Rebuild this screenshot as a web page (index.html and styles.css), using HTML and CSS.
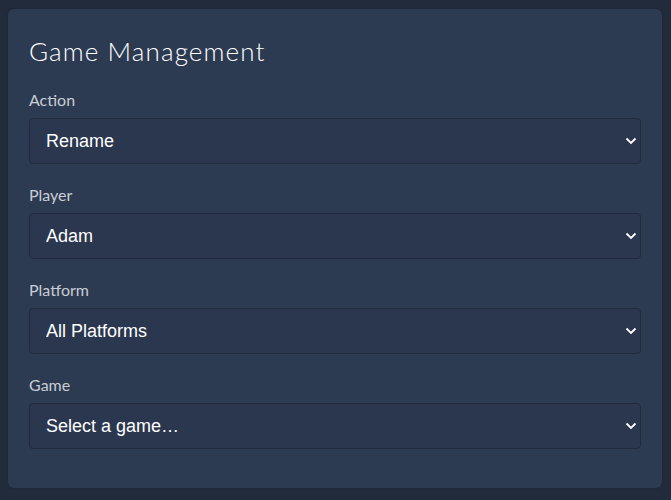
FILE: index.html
```html
<!DOCTYPE html>
<html lang="en">
<head>
<meta charset="utf-8">
<title>Game Management</title>
<link rel="stylesheet" href="styles.css">
</head>
<body>
<div class="page">
  <section class="card">
    <h1 class="title">Game Management</h1>
    <div class="field">
      <label class="label" for="action">Action</label>
      <div class="select-wrap">
        <select id="action" class="select"><option>Rename</option></select>
        <svg class="chevron" width="12" height="8" viewBox="0 0 12 8"><polyline points="1.5,1.5 6,6 10.5,1.5" fill="none" stroke="#fff" stroke-width="1.8"/></svg>
      </div>
    </div>
    <div class="field">
      <label class="label" for="player">Player</label>
      <div class="select-wrap">
        <select id="player" class="select"><option>Adam</option></select>
        <svg class="chevron" width="12" height="8" viewBox="0 0 12 8"><polyline points="1.5,1.5 6,6 10.5,1.5" fill="none" stroke="#fff" stroke-width="1.8"/></svg>
      </div>
    </div>
    <div class="field">
      <label class="label" for="platform">Platform</label>
      <div class="select-wrap">
        <select id="platform" class="select"><option>All Platforms</option></select>
        <svg class="chevron" width="12" height="8" viewBox="0 0 12 8"><polyline points="1.5,1.5 6,6 10.5,1.5" fill="none" stroke="#fff" stroke-width="1.8"/></svg>
      </div>
    </div>
    <div class="field">
      <label class="label" for="game">Game</label>
      <div class="select-wrap">
        <select id="game" class="select"><option>Select a game…</option></select>
        <svg class="chevron" width="12" height="8" viewBox="0 0 12 8"><polyline points="1.5,1.5 6,6 10.5,1.5" fill="none" stroke="#fff" stroke-width="1.8"/></svg>
      </div>
    </div>
  </section>
</div>
</body>
</html>
```
FILE: styles.css
```css
html, body {
  margin: 0;
  padding: 0;
  background: #212b3c;
  height: 100%;
}
.page {
  padding: 9px 9px 0 8px;
}
.card {
  background: #2c3a52;
  border-radius: 6px;
  padding: 26px 21px 39px 21px;
  box-shadow: 0 0 2px rgba(0, 0, 0, 0.25);
}
.title {
  margin: 0 0 21px 0;
  font-family: "Lato", "Open Sans", sans-serif;
  font-weight: 300;
  font-size: 26px;
  line-height: 32px;
  color: #ffffff;
  letter-spacing: 1.1px;
}
.field {
  display: flex;
  flex-direction: column;
  margin-bottom: 19px;
}
.field:last-child {
  margin-bottom: 0;
}
.label {
  font-family: "Lato", "Open Sans", sans-serif;
  font-size: 16px;
  line-height: 24px;
  color: #c9cdd5;
  margin-bottom: 6px;
}
.select-wrap {
  position: relative;
}
.select {
  appearance: none;
  -webkit-appearance: none;
  display: block;
  width: 100%;
  box-sizing: border-box;
  height: 46px;
  margin: 0;
  padding: 0 30px 0 16px;
  background: #2a374f;
  border: 1px solid #212b3d;
  border-radius: 4px;
  color: #ffffff;
  font-family: "Liberation Sans", Arial, sans-serif;
  font-size: 18px;
  outline: none;
}
.chevron {
  position: absolute;
  right: 4px;
  top: 19px;
  pointer-events: none;
}
```
